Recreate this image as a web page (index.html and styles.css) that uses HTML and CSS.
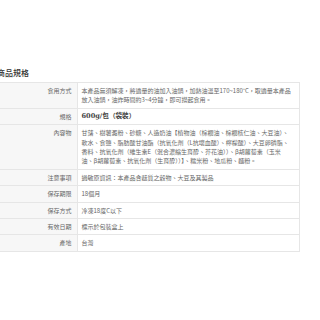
FILE: index.html
```html
<!DOCTYPE html>
<html lang="zh-Hant">

<head>
  <meta charset="UTF-8">
  <meta name="viewport" content="width=device-width, initial-scale=1">
  <title>商品規格</title>
  <link rel="stylesheet" href="styles.css">
</head>

<body>
  <div class="spec">
    <h2 class="spec-title">商品規格</h2>
    <table class="spec-table">
      <tr>
        <th>食用方式</th>
        <td>本產品無須解凍，將適量的油加入油鍋，加熱油溫至170~180°C，取適量本產品<br>放入油鍋，油炸時間約3~4分鐘，即可撈起食用。</td>
      </tr>
      <tr>
        <th>規格</th>
        <td class="size">600g/包（袋裝）</td>
      </tr>
      <tr>
        <th>內容物</th>
        <td>甘藷、樹薯澱粉、砂糖、人造奶油【植物油（棕櫚油、棕櫚核仁油、大豆油）、<br>軟水、食鹽、脂肪酸甘油酯（抗氧化劑（L抗壞血酸）、檸檬酸）、大豆卵磷脂、<br>香料、抗氧化劑（維生素E（混合濃縮生育醇、芥花油））、β胡蘿蔔素（玉米<br>油、β胡蘿蔔素、抗氧化劑（生育醇））】、糯米粉、地瓜粉、麵粉。</td>
      </tr>
      <tr>
        <th>注意事項</th>
        <td>過敏原資訊：本產品含麩質之穀物、大豆及其製品</td>
      </tr>
      <tr>
        <th>保存期限</th>
        <td>18個月</td>
      </tr>
      <tr>
        <th>保存方式</th>
        <td>冷凍18度C以下</td>
      </tr>
      <tr>
        <th>有效日期</th>
        <td>標示於包裝盒上</td>
      </tr>
      <tr>
        <th>產地</th>
        <td>台灣</td>
      </tr>
    </table>
  </div>
</body>

</html>
```

FILE: styles.css
```css
* {
  margin: 0;
  padding: 0;
  box-sizing: border-box;
}

body {
  font-family: "Noto Sans CJK TC", "Noto Sans", sans-serif;
  background: #fff;
  color: #666;
}

.spec {
  padding-top: 67px;
  width: 300px;
}

.spec-title {
  font-size: 8px;
  line-height: 11px;
  font-weight: 500;
  color: #333;
  margin-left: -3px;
  margin-bottom: 4px;
}

.spec-table {
  width: 100%;
  border-collapse: collapse;
  border-top: 1px solid #e6e6e6;
  border-right: 1px solid #e6e6e6;
  font-size: 6px;
  line-height: 9.4px;
}

.spec-table th,
.spec-table td {
  padding: 3px 4px;
  border-bottom: 1px solid #e6e6e6;
  vertical-align: top;
  font-weight: 400;
  white-space: nowrap;
}

.spec-table th {
  width: 77px;
  text-align: right;
  padding-right: 5px;
  background: #f7f7f7;
  border-right: 1px solid #e6e6e6;
  color: #666;
}

.spec-table td {
  text-align: left;
  background: #fff;
}

.spec-table .size {
  font-family: "DejaVu Serif", "Noto Sans CJK TC", serif;
  font-weight: 700;
  font-size: 6.6px;
  color: #444;
}
```
